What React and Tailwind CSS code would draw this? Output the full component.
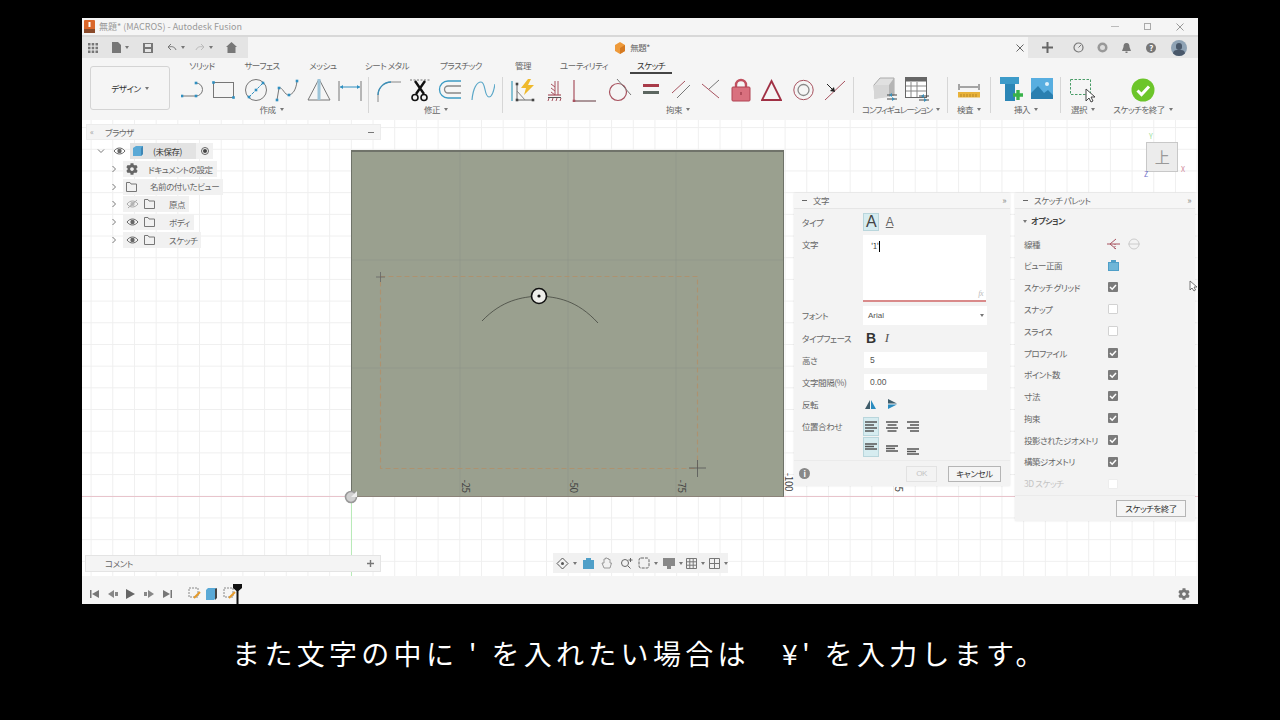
import React from "react";
import { FaCog } from "react-icons/fa";

const Caret = () => <span className="inline-block ml-[4px] align-middle border-x-[2px] border-t-[3px] border-x-transparent border-t-[#777]" />;

const Svg = ({ w = 24, h = 24, vb, children, className = "" }) => (
  <svg width={w} height={h} viewBox={vb || `0 0 ${w} ${h}`} fill="none" className={`shrink-0 ${className}`}>{children}</svg>
);
const N = ({ x, y, c = "#2f8fc0" }) => <rect x={x - 1.3} y={y - 1.3} width="2.6" height="2.6" fill={c} />;

const LineI = () => <Svg><path d="M1 18H15A6.5 6.5 0 0 0 15 5" stroke="#777" /><N x={1} y={18} /><N x={15} y={18} /><N x={15} y={5} /></Svg>;
const RectI = () => <Svg><rect x="1.5" y="4.5" width="20" height="15" stroke="#777" /><N x={1.5} y={4.5} /><N x={21.5} y={19.5} /></Svg>;
const CircleI = () => <Svg><circle cx="12" cy="12" r="10.5" stroke="#777" /><path d="M5 19L19 5" stroke="#2f8fc0" strokeDasharray="3 1" /><N x={5} y={19} /><N x={12} y={12} /><N x={19} y={5} /></Svg>;
const SplineI = () => <Svg><path d="M2 22L4 10C7 8 10 18 14 17C18 16 21 12 22 3" stroke="#777" /><N x={2} y={22} /><N x={4} y={10} /><N x={14} y={17} /><N x={22} y={3} /></Svg>;
const TriI = () => <Svg><path d="M12 1L23 22H1Z" stroke="#777" /><path d="M12 1V22" stroke="#9cc4d8" strokeWidth="3" /></Svg>;
const DimI = () => <Svg><path d="M1 3V23M23 3V23" stroke="#777" /><path d="M2 9H22" stroke="#2f8fc0" /><path d="M2 9L5 7V11ZM22 9L19 7V11Z" fill="#2f8fc0" /></Svg>;
const FilletI = () => <Svg><path d="M1 24V17C1 10 7 4 14 4H24" stroke="#888" /><path d="M1 17C1 10 7 4 14 4" stroke="#3c8fb8" strokeWidth="1.4" /></Svg>;
const Scissors = () => (
  <Svg w={20}>
    <path d="M0 2H20" stroke="#777" strokeDasharray="2 1.5" />
    <path d="M5 3L14 16M15 3L6 16" stroke="#111" strokeWidth="2.4" />
    <circle cx="5" cy="19.5" r="3" stroke="#111" strokeWidth="1.6" />
    <circle cx="14" cy="19.5" r="3" stroke="#111" strokeWidth="1.6" />
  </Svg>
);
const OffsetI = () => <Svg><path d="M23 3H10A8.5 8.5 0 0 0 10 20H23" stroke="#3c9bc4" strokeWidth="1.3" /><path d="M23 8H10A3.5 3.5 0 0 0 10 15H23" stroke="#888" strokeWidth="1.3" /></Svg>;
const SplineBlue = () => <Svg><path d="M1 22C2 10 6 4 10 4C15 4 13 19 18 19C21 19 23 12 24 6" stroke="#5aa7c8" strokeWidth="1.2" /></Svg>;

const AutoI = () => (
  <Svg w={26}>
    <path d="M2 3V23" stroke="#4aa3c0" strokeWidth="1.3" />
    <path d="M7 22V6M7 22H23" stroke="#666" />
    <path d="M7 13L15 22" stroke="#888" />
    <N x={7} y={22} c="#444" /><N x={23} y={22} c="#444" /><N x={7} y={6} c="#444" />
    <path d="M18 1L11 10H16L14 17L24 7H18L21 1Z" fill="#efb92c" />
  </Svg>
);
const FixI = () => (
  <Svg w={15}>
    <path d="M8 3V17M11 3V17M4 6L8 9M4 10L8 13M4 14L8 17" stroke="#a8525f" />
    <path d="M1 17H14" stroke="#a8525f" strokeWidth="1.2" />
    <path d="M1 19.5H14" stroke="#555" />
    <path d="M2 20L1 23M6 20L5 23M10 20L9 23M14 20L13 23" stroke="#a8525f" />
  </Svg>
);
const PerpI = () => <Svg w={25}><path d="M2 2V23H24" stroke="#a8525f" strokeWidth="1.2" /><path d="M2 23H24" stroke="#888" /><N x={2} y={23} c="#a8525f" /></Svg>;
const TanI = () => <Svg><circle cx="10" cy="14" r="8.5" stroke="#a8525f" strokeWidth="1.2" /><path d="M9 1L23 17" stroke="#777" /></Svg>;
const EqI = () => <Svg w={18}><rect x="1" y="6" width="16" height="3" fill="#a83a48" /><rect x="1" y="13" width="16" height="3" fill="#5c6660" /></Svg>;
const ParI = () => <Svg w={20}><path d="M1 15L14 3" stroke="#a8525f" /><path d="M6 20L19 7" stroke="#777" /></Svg>;
const VI = () => <Svg w={19}><path d="M1 6L18 20" stroke="#a8525f" /><path d="M8 11L18 2" stroke="#777" /></Svg>;
const LockI = () => <Svg w={20}><path d="M5 10V7A5 5 0 0 1 15 7V10" stroke="#c0505f" strokeWidth="2.4" /><rect x="1" y="9" width="18" height="14" rx="1" fill="#d9707e" stroke="#b04252" /><rect x="9.5" y="14" width="1" height="3" fill="#8a2a38" /></Svg>;
const TriRed = () => <Svg w={21}><path d="M10.5 3L20 22H1Z" stroke="#a03044" strokeWidth="1.8" /></Svg>;
const Concentric = () => <Svg w={21}><circle cx="10.5" cy="12" r="9.7" stroke="#a8525f" /><circle cx="10.5" cy="12" r="5.5" stroke="#888" strokeWidth="1.3" /></Svg>;
const Mid = () => <Svg w={22}><path d="M1 22L21 3" stroke="#a8525f" /><path d="M3 6L10 13" stroke="#222" /><path d="M11 14L6 13L10 9Z" fill="#222" /></Svg>;

const CubeI = () => (
  <Svg w={24} h={26}>
    <path d="M1 9L7 2H21V19L2 22Z" fill="#e0e0e0" stroke="#aaa" />
    <path d="M1 9H16V21L1 23Z" fill="#d6d6d6" />
    <path d="M16 9L21 2V18L16 21Z" fill="#b5b5b5" />
    <path d="M14 19H24M14 23H24" stroke="#444" /><path d="M19 17L16 19L19 21Z" fill="#3c8fb8" /><path d="M19 21L22 23L19 25Z" fill="#3c8fb8" />
  </Svg>
);
const TableI = () => (
  <Svg w={24} h={26}>
    <rect x="0.5" y="1.5" width="21" height="20" fill="#fff" stroke="#666" />
    <rect x="0.5" y="1.5" width="21" height="4" fill="#666" />
    <path d="M1 10H21M1 15H21M6 6V21M12 6V21" stroke="#888" />
    <path d="M14 20H24M14 24H24" stroke="#444" /><path d="M19 18L16 20L19 22Z" fill="#3c8fb8" /><path d="M19 22L22 24L19 26Z" fill="#3c8fb8" />
  </Svg>
);
const RulerI = () => <Svg w={22}><path d="M1 6V12M21 6V12M2 9H20" stroke="#555" /><rect x="0" y="14" width="22" height="5.5" fill="#e8b23a" /><path d="M3 16V19M6 16V19M9 16V19M12 16V19M15 16V19M18 16V19" stroke="#b98622" /></Svg>;
const BoltI = () => (
  <Svg w={23} h={26}>
    <rect x="0" y="1" width="19" height="7" fill="#3d9bc9" />
    <rect x="5" y="8" width="10" height="17" fill="#2b86b6" />
    <path d="M13 19H23M18 14V24" stroke="#38b24a" strokeWidth="3.4" />
  </Svg>
);
const PicI = () => (
  <Svg w={22} h={26}>
    <rect x="0" y="2" width="22" height="21" fill="#58aee0" />
    <circle cx="16" cy="8" r="2" fill="#dff1fb" />
    <path d="M0 23V17L7 10L13 17L17 14L22 19V23Z" fill="#2a7fb0" />
  </Svg>
);
const SelectI = () => (
  <Svg w={26} h={26}>
    <rect x="0.5" y="2.5" width="20" height="15" stroke="#4a9d68" strokeDasharray="2.5 1.5" />
    <path d="M16 12V24L19 21L21 25L23 24L21 20L25 20Z" fill="#fff" stroke="#444" />
  </Svg>
);
const FinishI = () => (
  <svg width="24" height="24" viewBox="0 0 24 24" className="shrink-0"><circle cx="12" cy="12" r="11.5" fill="#6cc52a" /><path d="M6.5 12.5L10.5 16.5L18 8.5" stroke="#fff" strokeWidth="3" fill="none" /></svg>
);

const Eye = ({ off }) => (
  <Svg w={13} h={10}>
    <path d="M1 5C4 1 9 1 12 5C9 9 4 9 1 5Z" stroke={off ? "#aaa" : "#666"} />
    <circle cx="6.5" cy="5" r="2.2" fill={off ? "#bbb" : "#666"} />
    {off && <path d="M2 9L11 1" stroke="#aaa" />}
  </Svg>
);
const Folder = () => <Svg w={11} h={10}><path d="M0.5 9.5V0.5H4L5 2H10.5V9.5Z" stroke="#777" /></Svg>;
const Chev = ({ down }) => (
  <svg width="8" height="8" viewBox="0 0 8 8" fill="none" className="shrink-0">
    <path d={down ? "M1 2.5L4 5.5L7 2.5" : "M2.5 1L5.5 4L2.5 7"} stroke="#777" />
  </svg>
);

const Check = ({ on, dim }) => (
  on ? (
    <svg width="10" height="10" viewBox="0 0 10 10" className="shrink-0"><rect width="10" height="10" rx="1" fill="#7b7b7b" /><path d="M2 5L4.2 7.2L8 3" stroke="#fff" strokeWidth="1.5" fill="none" /></svg>
  ) : (
    <span className={`block w-[10px] h-[10px] rounded-[1px] border bg-white ${dim ? "border-[#ededed]" : "border-[#d2d2d2]"}`} />
  )
);

const Align = ({ kind }) => {
  const l = {
    l: "M0 1H12M0 4H9M0 7H12M0 10H9",
    c: "M0 1H12M1.5 4H10.5M0 7H12M1.5 10H10.5",
    r: "M0 1H12M3 4H12M0 7H12M3 10H12",
  }[kind];
  return <svg width="12" height="11" viewBox="0 0 12 11" className="shrink-0"><path d={l} stroke="#555" strokeWidth="1.3" /></svg>;
};
const VAlign = () => <svg width="12" height="7" viewBox="0 0 12 7" className="shrink-0"><path d="M0 1H12M0 3.5H9M0 6H12" stroke="#555" strokeWidth="1.3" /></svg>;

const Label = ({ children }) => <div className="text-[8.5px] leading-[10px] text-[#666] mt-[2px] whitespace-nowrap flex items-center">{children}<Caret /></div>;
const Sep = ({ className }) => <div className={`w-px h-[36px] bg-[#d6d6d6] self-start mt-[-1px] ${className}`} />;

const Row = ({ label, children, className = "" }) => (
  <div className={`flex items-center h-[18px] ${className}`}>
    <div className="w-[69px] pl-[8px] text-[8.5px] text-[#666] whitespace-nowrap">{label}</div>
    {children}
  </div>
);

const PRow = ({ label, children, dim }) => (
  <div className="flex items-center h-[21.8px]">
    <div className={`w-[93px] pl-[9px] text-[8.5px] whitespace-nowrap ${dim ? "text-[#c4c4c4]" : "text-[#666]"}`}>{label}</div>
    {children}
  </div>
);

const TreeRow = ({ children }) => (
  <div className="flex items-center h-[17.8px] pl-[28px]">
    <Chev />
    <div className="ml-[5px] h-[16px] flex items-center bg-[#f1f1f1] text-[8.5px] text-[#666] whitespace-nowrap pr-[4px] pl-[3px]">{children}</div>
  </div>
);

export default function App() {
  return (
    <div className="w-[1280px] h-[720px] bg-black overflow-hidden pt-[18px] pl-[82px] font-['Noto_Sans_CJK_JP','Liberation_Sans',sans-serif]">
      <div className="w-[1116px] h-[586px] flex flex-col bg-white [font-feature-settings:'palt'] tracking-[-0.45px]">
        {/* title bar */}
        <div className="h-[17px] bg-[#f5f5f5] flex items-center pl-[2px] shrink-0">
          <svg width="11" height="13" viewBox="0 0 11 13" className="shrink-0"><rect width="11" height="13" rx="1" fill="#d9662a" /><rect y="9" width="11" height="4" fill="#8a4a2a" /><rect x="4.5" y="2" width="2" height="5" fill="#fff" /></svg>
          <span className="ml-[4px] text-[9px] tracking-normal text-[#999]">無題* (MACROS) - Autodesk Fusion</span>
          <div className="ml-auto flex items-center text-[#aaa] pr-[14px] gap-[25px]">
            <span className="block w-[8px] h-px bg-[#bbb]" />
            <span className="block w-[7px] h-[7px] border border-[#aaa]" />
            <svg width="8" height="8" viewBox="0 0 8 8"><path d="M0.5 0.5L7.5 7.5M7.5 0.5L0.5 7.5" stroke="#999" /></svg>
          </div>
        </div>
        <div className="h-[2px] bg-[#d8d8d8] shrink-0" />
        {/* tab row */}
        <div className="h-[21px] flex bg-[#f5f5f5] shrink-0">
          <div className="w-[166px] bg-[#e4e4e4] flex items-center pl-[6px]">
            <svg width="10" height="10" viewBox="0 0 10 10" className="shrink-0"><path d="M0 0H2.5V2.5H0ZM3.7 0H6.2V2.5H3.7ZM7.5 0H10V2.5H7.5ZM0 3.7H2.5V6.2H0ZM3.7 3.7H6.2V6.2H3.7ZM7.5 3.7H10V6.2H7.5ZM0 7.5H2.5V10H0ZM3.7 7.5H6.2V10H3.7ZM7.5 7.5H10V10H7.5Z" fill="#777" /></svg>
            <svg width="9" height="11" viewBox="0 0 9 11" className="ml-[14px] shrink-0"><path d="M0 0H6L9 3V11H0Z" fill="#777" /></svg>
            <Caret />
            <svg width="10" height="10" viewBox="0 0 10 10" className="ml-[14px] shrink-0"><path d="M0 0H10V10H0Z" fill="#777" /><rect x="2" y="1" width="6" height="3" fill="#e4e4e4" /><rect x="2" y="6" width="6" height="3" fill="#e4e4e4" /></svg>
            <svg width="10" height="7" viewBox="0 0 10 7" className="ml-[14px] shrink-0"><path d="M9 6C8 3 5 2 2 3M4 0L1 3L4 6" stroke="#777" fill="none" /></svg>
            <Caret />
            <svg width="10" height="7" viewBox="0 0 10 7" className="ml-[10px] shrink-0"><path d="M1 6C2 3 5 2 8 3M6 0L9 3L6 6" stroke="#bbb" fill="none" /></svg>
            <Caret />
            <svg width="11" height="11" viewBox="0 0 11 11" className="ml-[13px] shrink-0"><path d="M5.5 0L11 5H9.5V11H1.5V5H0Z" fill="#777" /></svg>
          </div>
          <div className="flex-1 flex items-center">
            <div className="w-[768px] flex items-center justify-center">
              <svg width="12" height="12" viewBox="0 0 12 12" className="shrink-0"><path d="M6 0L11 3V9L6 12L1 9V3Z" fill="#ee9a3a" /><path d="M6 6L11 3V9L6 12Z" fill="#d57a22" /></svg>
              <span className="ml-[4px] text-[8.5px] text-[#666]">無題*</span>
            </div>
            <svg width="8" height="8" viewBox="0 0 8 8" className="shrink-0"><path d="M0.5 0.5L7.5 7.5M7.5 0.5L0.5 7.5" stroke="#666" /></svg>
          </div>
          <div className="w-[170px] bg-[#e6e6e6] flex items-center pl-[14px] shrink-0">
            <svg width="11" height="11" viewBox="0 0 11 11" className="shrink-0"><path d="M5.5 0V11M0 5.5H11" stroke="#666" strokeWidth="2" /></svg>
            <svg width="11" height="11" viewBox="0 0 11 11" className="ml-[20px] shrink-0"><circle cx="5.5" cy="5.5" r="4.5" fill="none" stroke="#777" strokeWidth="1.2" /><path d="M5.5 5.5L8 3" stroke="#777" /></svg>
            <svg width="11" height="11" viewBox="0 0 11 11" className="ml-[13px] shrink-0"><circle cx="5.5" cy="5.5" r="5" fill="#999" /><circle cx="5.5" cy="5.5" r="2.5" fill="#ddd" /></svg>
            <svg width="9" height="10" viewBox="0 0 9 10" className="ml-[14px] shrink-0"><path d="M4.5 0C7 0 7.5 2 7.5 4L9 8H0L1.5 4C1.5 2 2 0 4.5 0ZM3.5 8.5H5.5V10H3.5Z" fill="#777" /></svg>
            <span className="ml-[15px] w-[10px] h-[10px] rounded-full bg-[#777] text-white text-[8px] leading-[10px] text-center font-bold shrink-0">?</span>
            <span className="ml-[15px] w-[16px] h-[16px] rounded-full bg-[#8fa3b5] overflow-hidden relative shrink-0">
              <span className="absolute left-[5px] top-[3px] w-[6px] h-[7px] rounded-full bg-[#49586a]" />
              <span className="absolute left-[2px] top-[10px] w-[12px] h-[8px] rounded-full bg-[#49586a]" />
            </span>
          </div>
        </div>
        {/* ribbon */}
        <div className="h-[62px] bg-[#f5f5f5] flex shrink-0 pl-[8px]">
          <div className="mt-[8px] w-[80px] h-[44px] border border-[#d4d4d4] rounded-[3px] flex items-center justify-center text-[8.5px] text-[#333] shrink-0">
            デザイン<Caret />
          </div>
          <div className="flex-1 flex flex-col min-w-0">
            {/* tabs */}
            <div className="h-[16px] flex items-start text-[8.5px] text-[#666] pl-[2px] whitespace-nowrap">
              <div className="w-[60px] text-center h-[16px] leading-[15px]">ソリッド</div>
              <div className="w-[60px] text-center h-[16px] leading-[15px]">サーフェス</div>
              <div className="w-[62px] text-center h-[16px] leading-[15px]">メッシュ</div>
              <div className="w-[66px] text-center h-[16px] leading-[15px]">シート メタル</div>
              <div className="w-[82px] text-center h-[16px] leading-[15px]">プラスチック</div>
              <div className="w-[42px] text-center h-[16px] leading-[15px]">管理</div>
              <div className="w-[80px] text-center h-[16px] leading-[15px]">ユーティリティ</div>
              <div className="ml-[6px] w-[42px] text-center h-[16px] leading-[15px] text-[#333] border-b-2 border-[#444]">スケッチ</div>
            </div>
            {/* tools */}
            <div className="flex items-start mt-[4px] pl-[11px]">
              <div className="w-[181px] flex flex-col items-center shrink-0">
                <div className="h-[24px] w-full flex items-center justify-between"><LineI /><RectI /><CircleI /><SplineI /><TriI /><DimI /></div>
                <Label>作成</Label>
              </div>
              <Sep className="ml-[6px]" />
              <div className="ml-[8px] w-[118px] flex flex-col items-center shrink-0">
                <div className="h-[24px] w-full flex items-center justify-between"><FilletI /><Scissors /><OffsetI /><SplineBlue /></div>
                <Label>修正</Label>
              </div>
              <Sep className="ml-[7px]" />
              <div className="ml-[7px] w-[336px] flex flex-col items-center shrink-0">
                <div className="h-[24px] w-full flex items-center justify-between"><AutoI /><FixI /><PerpI /><TanI /><EqI /><ParI /><VI /><LockI /><TriRed /><Concentric /><Mid /></div>
                <Label>拘束</Label>
              </div>
              <Sep className="ml-[7px]" />
              <div className="ml-[9px] w-[76px] flex flex-col items-center shrink-0">
                <div className="h-[24px] flex items-center gap-[8px] mt-[-1px]"><CubeI /><TableI /></div>
                <div className="mt-[1px] tracking-[-1px]"><Label>コンフィギュレーション</Label></div>
              </div>
              <Sep className="ml-[8px]" />
              <div className="ml-[6px] w-[30px] flex flex-col items-center shrink-0">
                <div className="h-[24px] flex items-center"><RulerI /></div>
                <Label>検査</Label>
              </div>
              <Sep className="ml-[6px]" />
              <div className="ml-[9px] w-[52px] flex flex-col items-center shrink-0">
                <div className="h-[24px] flex items-center gap-[8px] mt-[-1px]"><BoltI /><PicI /></div>
                <div className="mt-[1px]"><Label>挿入</Label></div>
              </div>
              <Sep className="ml-[8px]" />
              <div className="ml-[9px] w-[26px] flex flex-col items-center shrink-0">
                <div className="h-[24px] flex items-center"><SelectI /></div>
                <Label>選択</Label>
              </div>
              <div className="ml-[11px] w-[72px] flex flex-col items-center shrink-0">
                <div className="h-[24px] flex items-center"><FinishI /></div>
                <Label>スケッチを終了</Label>
              </div>
            </div>
          </div>
        </div>
        {/* canvas */}
        <div className="relative h-[456px] shrink-0 overflow-hidden bg-white bg-[linear-gradient(#efefef_1px,transparent_1px),linear-gradient(90deg,#efefef_1px,transparent_1px)] bg-[size:21.7px_21.7px] bg-[position:8.6px_7.1px]">
          {/* axes */}
          <div className="absolute left-0 top-[376px] w-full h-px bg-[#e8c4cc]" />
          <div className="absolute left-[269px] top-[376px] w-px h-[80px] bg-[#b8eab8]" />
          {/* sketch plane */}
          <div className="absolute left-[269px] top-[30px] w-[433px] h-[347px] bg-[#9aa08f] border-t-2 border-t-[#70736a] border-x border-x-[#6e7268] border-b border-b-[#8b8379]">
            <svg width="431" height="344" viewBox="0 0 431 344" fill="none" className="block">
              <path d="M108 0V344M216 0V344M324 0V344M0 108H431M0 216H431" stroke="#90968a" strokeWidth="0.7" />
              <rect x="28.5" y="124.5" width="317" height="192" stroke="#ad9270" strokeWidth="1.1" strokeDasharray="5 3" />
              <path d="M24 125H33M28.5 120V130" stroke="#666" strokeWidth="0.8" />
              <path d="M337 316H354M345.5 308V325" stroke="#555" strokeWidth="0.8" />
              <path d="M130 169C150 148 170 145 187 144M187 144C205 145 225 148 246 171" stroke="#44463f" strokeWidth="0.8" />
              <circle cx="187" cy="144" r="7.5" fill="#eeeeea" stroke="#111" strokeWidth="1.6" />
              <circle cx="187" cy="144" r="1.6" fill="#111" />
            </svg>
          </div>
          <span className="absolute left-[376px] top-[360px] w-[16px] text-center text-[10px] leading-[12px] text-[#444] rotate-90">-25</span>
          <span className="absolute left-[484px] top-[360px] w-[16px] text-center text-[10px] leading-[12px] text-[#444] rotate-90">-50</span>
          <span className="absolute left-[592px] top-[360px] w-[16px] text-center text-[10px] leading-[12px] text-[#444] rotate-90">-75</span>
          <span className="absolute left-[697px] top-[356px] w-[20px] text-center text-[10px] leading-[12px] text-[#444] rotate-90">-100</span>
          <span className="absolute left-[812px] top-[363px] w-[10px] text-center text-[10px] leading-[12px] text-[#444] rotate-90">5</span>
          <svg width="14" height="14" viewBox="0 0 14 14" className="absolute left-[262px] top-[370px]"><circle cx="7" cy="7" r="5.5" fill="#d0d0d0" stroke="#999" strokeWidth="1.6" /><path d="M7 7H13V1" fill="#eee" /></svg>

          {/* browser */}
          <div className="absolute left-[4px] top-[4px] w-[295px] h-[16px] bg-[#f4f4f4] border border-[#ececec] flex items-center text-[8.5px] text-[#666] pl-[3px] pr-[6px]">
            <span className="w-[15px] text-[8px] text-[#999]">«</span>ブラウザ
            <span className="ml-auto block w-[6px] h-px bg-[#777]" />
          </div>
          <div className="absolute left-0 top-[22px] flex flex-col">
            <div className="flex items-center h-[18px] pl-[15px]">
              <Chev down />
              <span className="ml-[8px]"><Eye /></span>
              <div className="ml-[4px] h-[16px] w-[66px] flex items-center bg-[#e3e3e3] text-[8.5px] text-[#333]">
                <svg width="12" height="12" viewBox="0 0 12 12" className="ml-[2px] shrink-0"><path d="M1 3L4 1H11V9L9 11H1Z" fill="#5aa9d6" /><path d="M9 3V11L11 9V1Z" fill="#3f87b5" /></svg>
                <span className="ml-[9px]">(未保存)</span>
              </div>
              <div className="h-[16px] w-[17px] bg-[#f1f1f1] flex items-center justify-center">
                <span className="w-[8px] h-[8px] rounded-full border border-[#666] flex items-center justify-center"><span className="w-[4px] h-[4px] rounded-full bg-[#444]" /></span>
              </div>
            </div>
            <TreeRow><FaCog size={12} color="#666" className="shrink-0" /><span className="ml-[10px]">ドキュメントの設定</span></TreeRow>
            <TreeRow><Folder /><span className="ml-[13px]">名前の付いたビュー</span></TreeRow>
            <TreeRow><Eye off /><span className="ml-[5px]"><Folder /></span><span className="ml-[14px]">原点</span></TreeRow>
            <TreeRow><Eye /><span className="ml-[5px]"><Folder /></span><span className="ml-[14px]">ボディ</span></TreeRow>
            <TreeRow><Eye /><span className="ml-[5px]"><Folder /></span><span className="ml-[14px]">スケッチ</span></TreeRow>
          </div>

          {/* view cube */}
          <div className="absolute left-[1064px] top-[22px] w-[32px] h-[30px] bg-[#ececec] border border-[#c8c8c8] flex items-center justify-center text-[15px] text-[#999]">上</div>
          <span className="absolute left-[1067px] top-[11px] text-[7px] text-[#9ade9a]">Y</span>
          <span className="absolute left-[1062px] top-[49px] text-[7px] text-[#7070c8]">Z</span>
          <span className="absolute left-[1099px] top-[44px] text-[7px] text-[#d08a9a]">X</span>

          {/* text panel */}
          <div className="absolute left-[712px] top-[73px] w-[216px] h-[293px] bg-[#f3f3f3] flex flex-col shadow-[0_0_2px_rgba(0,0,0,0.1)]">
            <div className="h-[16px] bg-[#f6f6f6] border-b border-[#e6e6e6] flex items-center text-[8.5px] text-[#666] pl-[8px] pr-[4px] shrink-0">
              <span className="block w-[5px] h-px bg-[#666] mr-[6px]" />文字
              <span className="ml-auto text-[9px] text-[#888]">»</span>
            </div>
            <div className="flex flex-col gap-[4px] pt-[4px]">
              <Row label="タイプ">
                <div className="w-[16px] h-[18px] bg-[#d6ecf0] border border-[#b9d6dc] flex items-center justify-center text-[16px] leading-[18px] text-[#444] font-['Liberation_Sans',sans-serif]">A</div>
                <div className="ml-[5px] w-[11px] flex flex-col items-center text-[12px] leading-[12px] text-[#666] font-['Liberation_Sans',sans-serif]"><span className="underline">A</span></div>
              </Row>
              <div className="flex h-[67px]">
                <div className="w-[69px] pl-[8px] pt-[3px] text-[8.5px] text-[#666]">文字</div>
                <div className="relative w-[123px] h-[67px] bg-white border-b-2 border-[#d98a8a] pl-[8px] pt-[6px] flex items-start text-[8px] leading-[10px] text-[#444]">
                  <span>'1'</span><span className="block w-px h-[11px] bg-black" />
                  <span className="absolute right-[3px] bottom-[1px] text-[8px] italic text-[#bbb] font-['Liberation_Serif',serif]">fx</span>
                </div>
              </div>
              <Row label="フォント" className="h-[19px]">
                <div className="w-[124px] h-[19px] bg-white flex items-center pl-[5px] pr-[3px] text-[8px] tracking-normal text-[#555] font-['Liberation_Sans',sans-serif]">Arial<span className="ml-auto"><Caret /></span></div>
              </Row>
              <Row label="タイプフェース">
                <div className="flex items-center pl-[3px]">
                  <span className="text-[14px] leading-[14px] font-bold text-[#333] font-['Liberation_Sans',sans-serif]">B</span>
                  <span className="ml-[9px] text-[13px] leading-[14px] italic text-[#555] font-['Liberation_Serif',serif]">I</span>
                </div>
              </Row>
              <Row label="高さ">
                <div className="ml-px w-[123px] h-[16px] bg-white flex items-center pl-[6px] text-[8.5px] tracking-normal text-[#555] font-['Liberation_Sans',sans-serif]">5</div>
              </Row>
              <Row label="文字間隔(%)">
                <div className="ml-px w-[123px] h-[16px] bg-white flex items-center pl-[6px] text-[8.5px] tracking-normal text-[#555] font-['Liberation_Sans',sans-serif]">0.00</div>
              </Row>
              <Row label="反転">
                <div className="flex items-center pl-[2px]">
                  <svg width="11" height="9" viewBox="0 0 11 9" className="shrink-0"><path d="M5 0V9H0Z" fill="#3f5c6a" /><path d="M6 0V9H11Z" fill="#2a8cc0" /></svg>
                  <svg width="9" height="10" viewBox="0 0 9 10" className="ml-[12px] shrink-0"><path d="M0 0L9 4.5H0Z" fill="#3f5c6a" /><path d="M0 5.5H9L0 10Z" fill="#2a8cc0" /></svg>
                </div>
              </Row>
              <Row label="位置合わせ" className="h-[19px]">
                <div className="w-[16px] h-[19px] bg-[#d6ecf0] border border-[#b9d6dc] flex items-center justify-center"><Align kind="l" /></div>
                <span className="ml-[7px]"><Align kind="c" /></span>
                <span className="ml-[9px]"><Align kind="r" /></span>
              </Row>
            </div>
            <div className="flex mt-px h-[20px] pl-[69px]">
              <div className="w-[16px] h-[20px] bg-[#d6ecf0] border border-[#b9d6dc] flex items-start justify-center pt-[5px]"><VAlign /></div>
              <span className="ml-[7px] pt-[8px]"><VAlign /></span>
              <span className="ml-[9px] pt-[11px]"><VAlign /></span>
            </div>
            <div className="mt-[3px] flex-1 border-t border-[#ebebeb] flex items-center pl-[5px] pr-[9px]">
              <span className="w-[11px] h-[11px] rounded-full bg-[#888] text-white text-[8px] leading-[11px] text-center font-bold">i</span>
              <div className="ml-auto w-[31px] h-[16px] bg-[#f3f3f3] border border-[#e2e2e2] flex items-center justify-center text-[8px] text-[#c4c4c4] font-['Liberation_Sans',sans-serif]">OK</div>
              <div className="ml-[11px] w-[53px] h-[16px] bg-[#f5f5f5] border border-[#b5b5b5] flex items-center justify-center text-[8.5px] text-[#333]">キャンセル</div>
            </div>
          </div>

          {/* palette */}
          <div className="absolute left-[933px] top-[73px] w-[180px] h-[328px] bg-[#f3f3f3] flex flex-col shadow-[0_0_2px_rgba(0,0,0,0.1)]">
            <div className="h-[16px] bg-[#f6f6f6] border-b border-[#e6e6e6] flex items-center text-[8.5px] text-[#666] pl-[8px] pr-[4px] shrink-0">
              <span className="block w-[5px] h-px bg-[#666] mr-[6px]" />スケッチ パレット
              <span className="ml-auto text-[9px] text-[#888]">»</span>
            </div>
            <div className="h-[24px] flex items-center pl-[8px] text-[8px] text-[#444] font-bold shrink-0">
              <span className="block mr-[4px] border-x-[2.5px] border-t-[3.5px] border-x-transparent border-t-[#777]" />オプション
            </div>
            <PRow label="線種">
              <svg width="14" height="12" viewBox="0 0 14 12" fill="none" className="ml-[-1px] shrink-0"><path d="M0 6H13M9 1L3 6L9 11" stroke="#a8525f" /><path d="M8 6V11" stroke="#a8525f" strokeDasharray="1 1" /></svg>
              <svg width="12" height="12" viewBox="0 0 12 12" fill="none" className="ml-[7px] shrink-0"><circle cx="6" cy="6" r="5" stroke="#ccc" /><path d="M0 6H12" stroke="#ccc" /></svg>
            </PRow>
            <PRow label="ビュー正面">
              <svg width="11" height="11" viewBox="0 0 11 11" className="shrink-0"><path d="M0 2H3V0H8V2H11V11H0Z" fill="#4f9fc8" /><rect x="1" y="3" width="9" height="7" fill="#6fb6d8" /></svg>
            </PRow>
            <PRow label="スケッチ グリッド"><Check on /></PRow>
            <PRow label="スナップ"><Check /></PRow>
            <PRow label="スライス"><Check /></PRow>
            <PRow label="プロファイル"><Check on /></PRow>
            <PRow label="ポイント数"><Check on /></PRow>
            <PRow label="寸法"><Check on /></PRow>
            <PRow label="拘束"><Check on /></PRow>
            <PRow label="投影されたジオメトリ"><Check on /></PRow>
            <PRow label="構築ジオメトリ"><Check on /></PRow>
            <PRow label="3D スケッチ" dim><Check dim /></PRow>
            <div className="mt-auto h-[26px] border-t border-[#ebebeb] flex items-center justify-end pr-[9px]">
              <div className="w-[70px] h-[17px] bg-[#f5f5f5] border border-[#b5b5b5] flex items-center justify-center text-[8.5px] text-[#333]">スケッチを終了</div>
            </div>
          </div>

          {/* cursor */}
          <svg width="9" height="12" viewBox="0 0 9 12" className="absolute left-[1107px] top-[160px]"><path d="M1 1V10L3 8L5 11L6.5 10L5 7H8Z" fill="#fff" stroke="#555" strokeWidth="0.8" /></svg>

          {/* comments */}
          <div className="absolute left-[3px] top-[435px] w-[296px] h-[17px] bg-[#f4f4f4] border border-[#e4e4e4] flex items-center text-[8.5px] text-[#666] pl-[19px] pr-[6px]">
            コメント
            <svg width="7" height="7" viewBox="0 0 7 7" className="ml-auto"><path d="M3.5 0V7M0 3.5H7" stroke="#777" strokeWidth="1.4" /></svg>
          </div>

          {/* nav bar */}
          <div className="absolute left-[471px] top-[433px] w-[175px] h-[20px] bg-[#f1f1f1] flex items-center pl-[3px]">
            <svg width="13" height="13" viewBox="0 0 13 13" fill="none" className="shrink-0"><path d="M6.5 1L9 3.5L12 6.5L9 9.5L6.5 12L4 9.5L1 6.5L4 3.5Z" stroke="#555" /><circle cx="6.5" cy="6.5" r="1.5" fill="#555" /></svg>
            <Caret />
            <svg width="11" height="11" viewBox="0 0 11 11" className="ml-[6px] shrink-0"><path d="M0 2H3V0H8V2H11V11H0Z" fill="#4f9fc8" /></svg>
            <svg width="12" height="12" viewBox="0 0 12 12" fill="none" className="ml-[7px] shrink-0"><path d="M3 11L1 6H3V2H4.5V1H6V1.5H7.5V2.5H9V6H10.5L9 11Z" stroke="#999" /></svg>
            <svg width="13" height="12" viewBox="0 0 13 12" fill="none" className="ml-[7px] shrink-0"><circle cx="5" cy="6" r="3.5" stroke="#666" /><path d="M8 9L10.5 11.5M10.5 1V5M8.5 3H12.5" stroke="#666" /></svg>
            <svg width="12" height="12" viewBox="0 0 12 12" fill="none" className="ml-[5px] shrink-0"><rect x="1" y="1" width="10" height="10" rx="2" stroke="#666" strokeDasharray="3 1" /></svg>
            <Caret />
            <svg width="12" height="11" viewBox="0 0 12 11" className="ml-[5px] shrink-0"><rect width="12" height="8" fill="#888" /><rect x="4" y="8" width="4" height="3" fill="#888" /></svg>
            <Caret />
            <svg width="11" height="11" viewBox="0 0 11 11" fill="none" className="ml-[3px] shrink-0"><path d="M0.5 0.5H10.5V10.5H0.5ZM3.8 0.5V10.5M7.2 0.5V10.5M0.5 3.8H10.5M0.5 7.2H10.5" stroke="#777" /></svg>
            <Caret />
            <svg width="11" height="11" viewBox="0 0 11 11" fill="none" className="ml-[4px] shrink-0"><path d="M0.5 0.5H10.5V10.5H0.5ZM5.5 0.5V10.5M0.5 5.5H10.5" stroke="#777" /></svg>
            <Caret />
          </div>
        </div>
        {/* timeline */}
        <div className="h-[28px] bg-[#f5f5f5] flex items-center pt-[7px] pl-[8px] pr-[8px] shrink-0 relative">
          <svg width="9" height="8" viewBox="0 0 9 8" className="shrink-0"><path d="M0 0H1.5V8H0ZM9 0V8L2 4Z" fill="#777" /></svg>
          <svg width="10" height="8" viewBox="0 0 10 8" className="ml-[9px] shrink-0"><path d="M6 0V8L0 4ZM7 2H10V6H7Z" fill="#888" /></svg>
          <svg width="9" height="10" viewBox="0 0 9 10" className="ml-[8px] shrink-0"><path d="M0 0L9 5L0 10Z" fill="#666" /></svg>
          <svg width="10" height="8" viewBox="0 0 10 8" className="ml-[9px] shrink-0"><path d="M4 0V8L10 4ZM0 2H3V6H0Z" fill="#888" /></svg>
          <svg width="9" height="8" viewBox="0 0 9 8" className="ml-[9px] shrink-0"><path d="M7.5 0H9V8H7.5ZM0 0V8L7 4Z" fill="#777" /></svg>
          <svg width="13" height="13" viewBox="0 0 13 13" fill="none" className="ml-[16px] shrink-0"><rect x="1" y="1" width="9" height="9" stroke="#888" strokeDasharray="2 1" /><path d="M6 11L12 5" stroke="#e59a2a" strokeWidth="2" /></svg>
          <svg width="12" height="12" viewBox="0 0 12 12" className="ml-[5px] shrink-0"><path d="M0 2L2 0H10V10L8 12H0Z" fill="#5aa9d6" /><path d="M9 1V12L11 10V0Z" fill="#444" /></svg>
          <svg width="13" height="13" viewBox="0 0 13 13" fill="none" className="ml-[5px] shrink-0"><rect x="1" y="1" width="9" height="9" stroke="#888" strokeDasharray="2 1" /><path d="M6 11L12 5" stroke="#e59a2a" strokeWidth="2" /></svg>
          <svg width="9" height="20" viewBox="0 0 9 20" className="absolute left-[151px] top-[8px]"><path d="M0 0H9V4L5.5 7V20H3.5V7L0 4Z" fill="#111" /></svg>
          <span className="ml-auto"><FaCog size={12} color="#777" /></span>
        </div>
      </div>
      {/* subtitle */}
      <div className="ml-[-82px] w-[1280px] h-[100px] flex items-center justify-center pb-[2px] text-white text-[28px] leading-[40px] tracking-[4.3px] whitespace-pre">
        また文字の中に ' を入れたい場合は　¥' を入力します。
      </div>
    </div>
  );
}
